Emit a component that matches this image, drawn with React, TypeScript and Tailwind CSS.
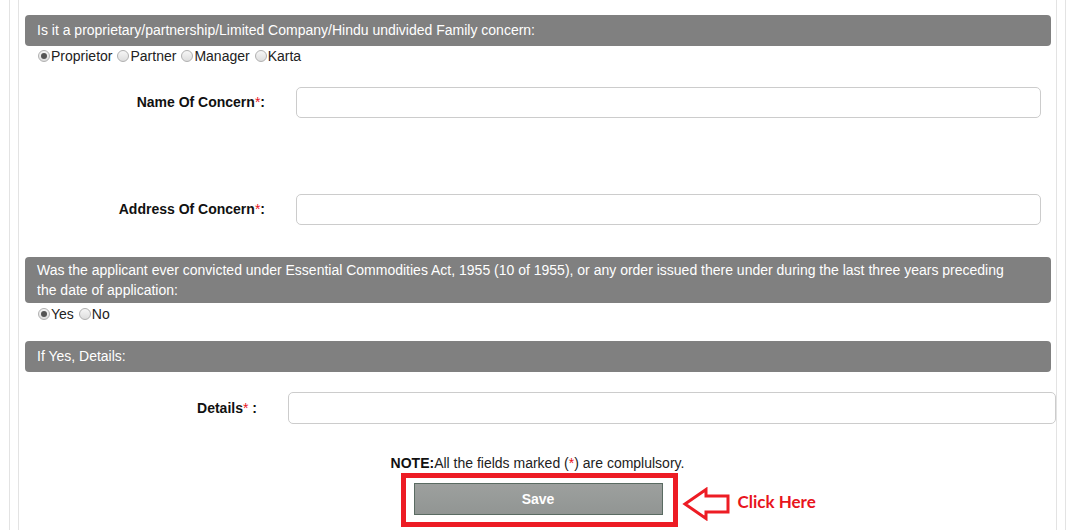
import React from 'react';

function Radio({ checked }: { checked?: boolean }) {
  return (
    <span className="inline-flex items-center justify-center w-[12px] h-[12px] rounded-full border border-[#b0b0b0] bg-gradient-to-b from-[#f6f6f6] to-[#dddddd] mr-[1px]">
      {checked && <span className="block w-[6px] h-[6px] rounded-full bg-[#555]" />}
    </span>
  );
}

function RadioGroup({ options, selected }: { options: string[]; selected: string }) {
  return (
    <div className="pl-[19px] leading-[16px] text-[14px] text-[#222] flex items-center">
      {options.map(o => (
        <span key={o} className="inline-flex items-center mr-[5px]">
          <Radio checked={o === selected} />
          {o}
        </span>
      ))}
    </div>
  );
}

function Header({ children, tall }: { children: React.ReactNode; tall?: boolean }) {
  return (
    <div
      className={`ml-[6px] mr-[5px] bg-[#808080] rounded-[4px] text-white text-[14px] pl-[12px] ${
        tall ? 'py-[3px] leading-[20px] pr-[24px]' : 'h-[31px] flex items-center pr-[12px]'
      }`}
    >
      {children}
    </div>
  );
}

function Req() {
  return <span className="text-[#e8141d] font-normal">*</span>;
}

export default function App() {
  return (
    <div className="w-[1075px] h-[530px] overflow-hidden bg-white" style={{ fontFamily: '"Liberation Sans", Arial, sans-serif' }}>
      <div className="ml-[9px] w-[1057px] h-[560px] border-x border-[#e3e3e3]">
        <div className="ml-[8px] w-[1039px] h-full border-x border-[#e3e3e3] pt-[15px]">
          <Header>Is it a proprietary/partnership/Limited Company/Hindu undivided Family concern:</Header>
          <div className="mt-[2px]">
            <RadioGroup options={['Proprietor', 'Partner', 'Manager', 'Karta']} selected="Proprietor" />
          </div>

          <div className="mt-[23px] flex items-center">
            <div className="w-[246px] text-right text-[14px] font-bold text-[#111]">
              Name Of Concern<Req />:
            </div>
            <input className="ml-[31px] w-[745px] h-[31px] border border-[#cccccc] rounded-[5px] outline-none" />
          </div>

          <div className="mt-[76px] flex items-center">
            <div className="w-[246px] text-right text-[14px] font-bold text-[#111]">
              Address Of Concern<Req />:
            </div>
            <input className="ml-[31px] w-[745px] h-[31px] border border-[#cccccc] rounded-[5px] outline-none" />
          </div>

          <div className="mt-[32px]">
            <Header tall>
              Was the applicant ever convicted under Essential Commodities Act, 1955 (10 of 1955), or any order issued there under during the last three years preceding the date of application:
            </Header>
          </div>
          <div className="mt-[3px]">
            <RadioGroup options={['Yes', 'No']} selected="Yes" />
          </div>

          <div className="mt-[19px]">
            <Header>If Yes, Details:</Header>
          </div>

          <div className="mt-[20px] flex items-center">
            <div className="w-[238px] text-right text-[14px] font-bold text-[#111]">
              Details<Req /> :
            </div>
            <input className="ml-[31px] flex-1 h-[32px] border border-[#cccccc] rounded-[5px] outline-none" />
          </div>

          <div className="mt-[31px] text-center text-[14px] leading-[16px] text-[#222]">
            <span className="font-bold text-[#111]">NOTE:</span>All the fields marked (<span className="text-[#e8141d]">*</span>) are complulsory.
          </div>

          <div className="mt-[2px] flex justify-center pl-[3px]">
            <div className="relative border-[5px] border-[#ed1c24] pt-[5px] pb-[7px] pl-[8px] pr-[10px]">
              <button className="w-[249px] h-[32px] border border-[#5a6b62] bg-gradient-to-b from-[#9da09e] to-[#919593] text-white font-bold text-[14px]">
                Save
              </button>
              <div className="absolute left-[276px] top-[9px] flex items-center">
                <svg width="50" height="34" viewBox="0 0 50 34">
                  <path
                    d="M3 17 L24 2.5 L24 9 L46 9 L46 25 L24 25 L24 31.5 Z"
                    fill="white"
                    stroke="#ed1c24"
                    strokeWidth="3"
                    strokeLinejoin="miter"
                  />
                </svg>
                <span
                  className="ml-[6px] text-[17px] font-bold text-[#e8141d] whitespace-nowrap relative -top-[2px]"
                  style={{ fontFamily: 'Lato, "Open Sans", sans-serif' }}
                >
                  Click Here
                </span>
              </div>
            </div>
          </div>
        </div>
      </div>
    </div>
  );
}
